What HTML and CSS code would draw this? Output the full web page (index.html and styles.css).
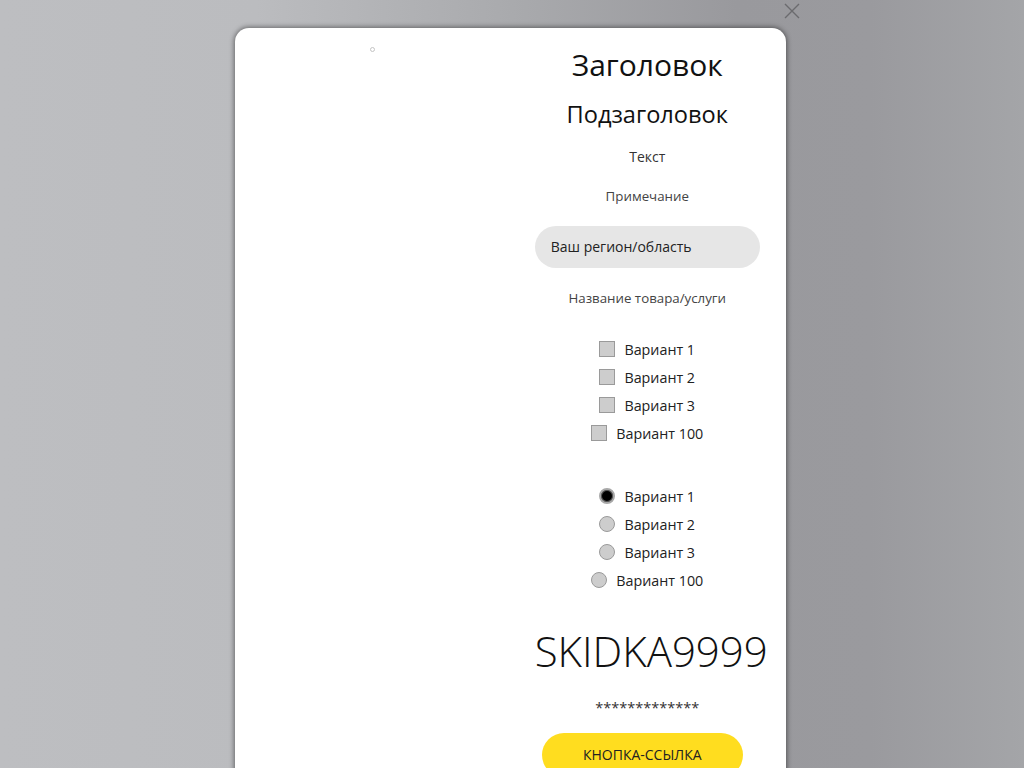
FILE: index.html
```html
<!DOCTYPE html>
<html lang="ru">
<head>
<meta charset="utf-8">
<title>Popup</title>
<link rel="stylesheet" href="styles.css">
</head>
<body>
<div class="overlay">
  <div class="modal">
    <div class="media"><span class="loader"></span></div>
    <div class="content">
      <h1 class="title">Заголовок</h1>
      <h2 class="subtitle">Подзаголовок</h2>
      <p class="text">Текст</p>
      <p class="note">Примечание</p>
      <div class="field">Ваш регион/область</div>
      <p class="product">Название товара/услуги</p>
      <ul class="options checks">
        <li><span class="box"></span>Вариант 1</li>
        <li><span class="box"></span>Вариант 2</li>
        <li><span class="box"></span>Вариант 3</li>
        <li><span class="box"></span>Вариант 100</li>
      </ul>
      <ul class="options radios">
        <li><span class="dot on"></span>Вариант 1</li>
        <li><span class="dot"></span>Вариант 2</li>
        <li><span class="dot"></span>Вариант 3</li>
        <li><span class="dot"></span>Вариант 100</li>
      </ul>
      <div class="promo">SKIDKA9999</div>
      <p class="stars">*************</p>
      <a class="btn" href="#">КНОПКА-ССЫЛКА</a>
    </div>
  </div>
  <button class="close" aria-label="Закрыть">
    <svg width="16" height="16" viewBox="0 0 16 16"><path d="M1 1L15 15M15 1L1 15" stroke="#6b6b6e" stroke-width="1.4" fill="none"/></svg>
  </button>
</div>
</body>
</html>
```
FILE: styles.css
```css
html, body {
  margin: 0;
  padding: 0;
  height: 100%;
  overflow: hidden;
}
body {
  font-family: "Open Sans", "Liberation Sans", sans-serif;
  color: #222;
}
.overlay {
  height: 768px;
  background: linear-gradient(to right, #bdbec1 0%, #bbbcbf 25%, #a9aaad 50%, #99999d 72%, #9a9a9e 85%, #a4a5a8 100%);
  padding: 28px 0 0 235px;
  box-sizing: border-box;
  position: relative;
}
.modal {
  width: 551px;
  height: 800px;
  background: #fff;
  border-radius: 14px;
  box-shadow: 0 0 5px 1px rgba(0,0,0,0.45);
  display: grid;
  grid-template-columns: 1fr 1fr;
}
.media {
  display: flex;
  justify-content: center;
  padding-top: 19px;
}
.loader {
  width: 3px;
  height: 3px;
  border: 1px solid #c4c4c4;
  border-radius: 50%;
}
.content {
  display: flex;
  flex-direction: column;
  align-items: center;
  text-align: center;
  padding-top: 19px;
  padding-right: 2px;
}
.title {
  margin: 0;
  font-size: 30px;
  font-weight: 400;
  line-height: 36px;
  color: #111;
}
.subtitle {
  margin: 16px 0 0;
  font-size: 23.6px;
  font-weight: 400;
  line-height: 30px;
  color: #111;
}
.text {
  margin: 18px 0 0;
  font-size: 14px;
  line-height: 20px;
  color: #333;
}
.note {
  margin: 19px 0 0;
  font-size: 13.3px;
  line-height: 20px;
  color: #444;
}
.field {
  margin-top: 20px;
  width: 225px;
  height: 42px;
  box-sizing: border-box;
  padding: 0 16px;
  border-radius: 21px;
  background: #e6e6e6;
  font-size: 14px;
  line-height: 42px;
  text-align: left;
  color: #222;
}
.product {
  margin: 20px 0 0;
  font-size: 13.3px;
  line-height: 20px;
  color: #444;
}
.options {
  list-style: none;
  margin: 27px 0 0;
  padding: 0;
  display: flex;
  flex-direction: column;
  align-items: center;
}
.radios {
  margin-top: 35px;
}
.options li {
  display: flex;
  align-items: center;
  gap: 9px;
  height: 28px;
  font-size: 14.3px;
  color: #222;
}
.box {
  width: 16px;
  height: 16px;
  box-sizing: border-box;
  background: #cdcdcd;
  border: 1px solid #9a9a9a;
}
.dot {
  width: 16px;
  height: 16px;
  box-sizing: border-box;
  border-radius: 50%;
  background: #cdcdcd;
  border: 1px solid #9a9a9a;
}
.dot.on {
  background: #000;
  border: 2px solid #a8a8a8;
  box-shadow: inset 0 0 0 1px #555;
}
.promo {
  margin: 32px 0 0 8px;
  font-size: 42px;
  font-weight: 300;
  line-height: 50px;
  color: #111;
}
.stars {
  margin: 22px 0 0;
  font-size: 14.5px;
  line-height: 20px;
  color: #333;
}
.btn {
  margin: 15px 10px 0 0;
  width: 201px;
  height: 44px;
  border-radius: 22px;
  background: #ffdd1f;
  color: #222;
  font-size: 14px;
  line-height: 44px;
  text-decoration: none;
}
.close {
  position: absolute;
  left: 784px;
  top: 3px;
  width: 16px;
  height: 16px;
  padding: 0;
  border: 0;
  background: none;
  cursor: pointer;
}
.close svg { display: block; }
```
